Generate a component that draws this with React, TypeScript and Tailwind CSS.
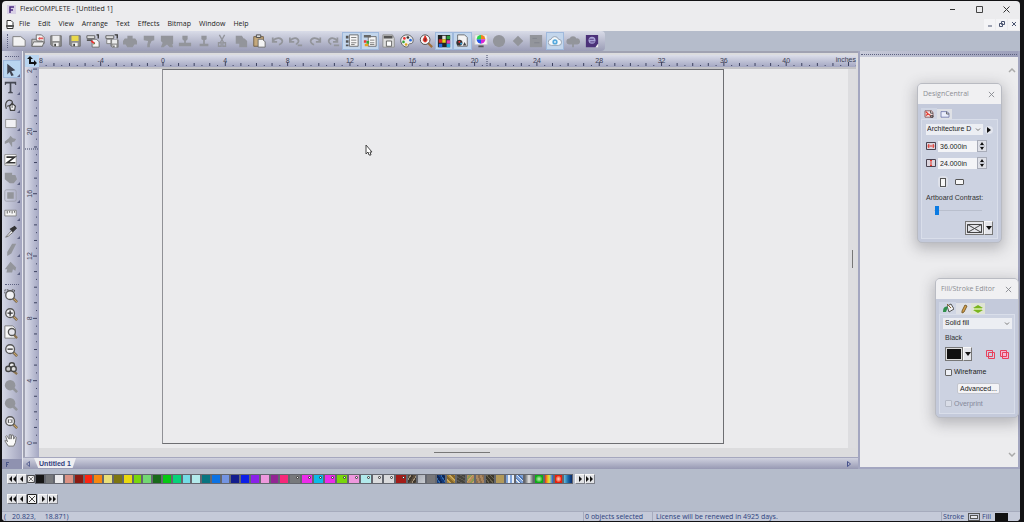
import type { ReactNode } from "react";

type IconProps = { children: ReactNode; className?: string; box?: string };

function Icon({ children, className = "size-4", box = "0 0 16 16" }: IconProps) {
  return (
    <svg viewBox={box} className={className} fill="none" aria-hidden="true">
      {children}
    </svg>
  );
}

const GREY = "#93959b";

// shared icon fragments
const page = (x: number, y: number, w = 9, h = 10) => (
  <path
    d={`M${x} ${y}h${w - 3}l3 3v${h - 3}h-${w}z`}
    fill="#f4f4f4"
    stroke="#666"
  />
);
const floppy = (x: number, y: number, s: number, label = "#ececec") => (
  <g transform={`translate(${x} ${y}) scale(${s})`}>
    <path d="M1 1h12v12H3l-2-2z" fill="#8e8e8e" stroke="#6a6a6a" />
    <path d="M3 1h8v6H3z" fill={label} />
    <path d="M4 9h6v4H4z" fill="#f2f2f2" />
    <path d="M5 10h2v3H5z" fill="#444" />
  </g>
);

const topTools: { name: string; on?: boolean; art: ReactNode }[] = [
  {
    name: "New",
    art: <path d="M1 3h9l5 4v7H1z" fill="#f3f3f3" stroke="#777" />,
  },
  {
    name: "Open",
    art: (
      <>
        {page(6, 1)}
        <path d="M1 6h5l1 2h6v6H1z" fill="#c9c9c9" stroke="#666" />
        <path d="M3 9h12l-2 5H1z" fill="#eee" stroke="#666" />
        <path d="M8 5l2-2v1h4v2h-4v1z" fill="#e45a5a" />
      </>
    ),
  },
  { name: "Save", art: floppy(1, 1, 1) },
  { name: "Save as", art: floppy(1, 1, 1, "#ead94c") },
  {
    name: "Import",
    art: (
      <>
        <path d="M1 2h9v3H1z" fill="#eee" stroke="#555" />
        <path d="M1 6h6v2H1z" fill="#555" />
        {page(7, 6, 8, 9)}
        <path d="M6 8l4 3" stroke="#e33" strokeWidth="2" />
        <path d="M8 13l2-2V9z" fill="#2a8a3a" />
        <path d="M12 1h2v4" stroke="#333" strokeWidth="1.5" />
      </>
    ),
  },
  {
    name: "Export",
    art: (
      <>
        <path d="M1 2h9v3H1z" fill="#eee" stroke="#555" />
        <path d="M2 6h6v5H2z" fill="#eee" stroke="#777" />
        {floppy(6, 6, 0.7)}
        <path d="M11 1h3v4" stroke="#333" strokeWidth="1.5" />
      </>
    ),
  },
  {
    name: "Print",
    art: <path d="M5 2h6v3h3l2 3v4h-3l-2 3H5l-2-3H0V8l2-3h3z" fill={GREY} />,
  },
  { name: "Cut plot", art: <path d="M2 2h12v5l-3 1-2 4v3H6v-3l1-4-5-1z" fill={GREY} /> },
  {
    name: "Rip and print",
    art: <path d="M1 2h14v9l-1 1 1 3h-4l-3-3-4 3H1l2-5-2-2z" fill={GREY} />,
  },
  {
    name: "Engrave",
    art: <path d="M5 2h6v4l-2 2v2h6v4H1v-4h6V8L5 6z" fill={GREY} />,
  },
  {
    name: "Route",
    art: <path d="M5 2h6v4l-2 1v4h4v3H3v-3h4V7L5 6z" fill={GREY} />,
  },
  {
    name: "Cut",
    art: (
      <>
        <path d="M5 1l5 9M11 1L6 10" stroke={GREY} strokeWidth="1.5" />
        <path d="M4 10h3v4H4zM9 10h3v4H9z" stroke={GREY} strokeWidth="1.5" />
      </>
    ),
  },
  { name: "Copy", art: <path d="M2 2h7l2 3h1l3 3v7H6v-4H2z" fill={GREY} /> },
  {
    name: "Paste",
    art: (
      <>
        <path d="M2 3h11v11H2z" fill="#c4a87c" stroke="#6f5c40" />
        <path d="M5 1h5v3H5z" fill="#ddd" stroke="#444" />
        {page(7, 6, 8, 9)}
      </>
    ),
  },
  {
    name: "Undo",
    art: <path d="M2 4v5h5M2 8c4-5 10-4 11 0 0 2-2 4-4 4" stroke={GREY} strokeWidth="2" />,
  },
  {
    name: "Undo all",
    art: <path d="M1 4v5h5M1 8c4-5 9-4 10 0 0 2-2 3-3 4M10 13h5" stroke={GREY} strokeWidth="2" />,
  },
  {
    name: "Redo",
    art: <path d="M14 4v5H9M14 8C10 3 4 4 3 8c0 2 2 4 4 4" stroke={GREY} strokeWidth="2" />,
  },
  {
    name: "Redo all",
    art: <path d="M13 4v5H8M13 8C9 3 4 4 3 8c0 2 1 3 3 4M9 13h6" stroke={GREY} strokeWidth="2" />,
  },
  {
    name: "Design central",
    on: true,
    art: (
      <>
        <path d="M5 1h10v13H5z" fill="#f6f6f6" stroke="#666" />
        <path d="M7 4h6M7 7h6M7 10h6M7 12h4" stroke="#777" />
        <path d="M1 2h3v3H1zM1 7h3v3H1zM1 12h3v2H1z" fill="#555" />
      </>
    ),
  },
  {
    name: "Fill editor",
    on: true,
    art: (
      <>
        <path d="M6 3h9v11H6z" fill="#f6f6f6" stroke="#666" />
        <path d="M1 1h8v3H1z" fill="#666" />
        <path d="M8 7h5M8 10h5M8 12h5" stroke="#777" />
        <path d="M1 7h3v3H1z" fill="#e33" />
        <path d="M4 8h3v3H4z" fill="#3a3" />
        <path d="M2 11h4v3H2z" fill="#e9a21e" />
      </>
    ),
  },
  {
    name: "Production manager",
    art: (
      <>
        <path d="M1 1h11l2 4v10H1z" fill="#dedede" stroke="#888" />
        <path d="M2 2h10v3H2z" fill="#555" />
        <path d="M5 8h6v6H5z" fill="#fff" stroke="#555" />
      </>
    ),
  },
  {
    name: "Color specs",
    art: (
      <>
        <path
          d="M8 1C3 1 0 5 1 9c1 4 4 6 7 6 2 0 1-3 3-4 2 0 4 0 4-4 0-3-3-6-7-6z"
          fill="#eee"
          stroke="#555"
        />
        <circle cx="5" cy="5" r="1.5" fill="#e33" />
        <circle cx="9" cy="4" r="1.5" fill="#333" />
        <circle cx="12" cy="7" r="1.5" fill="#2a6be0" />
        <circle cx="4" cy="9" r="1.5" fill="#37a637" />
        <circle cx="7" cy="12" r="1.5" fill="#e0a51c" />
      </>
    ),
  },
  {
    name: "Find color",
    art: (
      <>
        <path d="M10 10l5 5" stroke="#a0703a" strokeWidth="2.5" />
        <circle cx="7" cy="6.5" r="5.5" fill="#f8f8f8" stroke="#444" />
        <path d="M7 2L5 6c-1 4 5 4 4 0z" fill="#dc2a20" stroke="#dc2a20" />
        <path d="M7 5v3" stroke="#333" />
      </>
    ),
  },
  {
    name: "Swatch table",
    on: true,
    art: (
      <>
        <path d="M1 1h14v14H1z" fill="#222" />
        <path d="M6 2h4v4H6z" fill="#ddd" />
        <path d="M11 2h4v4h-4z" fill="#2a9d3e" />
        <path d="M2 6h4v4H2z" fill="#d92b2b" />
        <path d="M6 6h4v4H6z" fill="#e9d21e" />
        <path d="M11 7h4v4h-4z" fill="#e33bb0" />
        <path d="M2 11h4v4H2z" fill="#2a6be0" />
        <path d="M11 11h4v4h-4z" fill="#21a8d8" />
      </>
    ),
  },
  {
    name: "Fill page",
    on: true,
    art: (
      <>
        {page(3, 1, 11, 13)}
        <circle cx="5" cy="10" r="3.5" fill="#333" />
        <path d="M4 8h2v2H4z" fill="#e33" />
        <path d="M6 10h2v2H6z" fill="#37a6e0" />
        <path d="M11 9l2 4H9z" fill="#444" />
      </>
    ),
  },
  {
    name: "Color wheel",
    art: (
      <>
        <path d="M1 1h14v11H1z" fill="#f5f5f5" stroke="#ccc" />
        <path d="M8 6V1a5 5 0 0 1 5 5z" fill="#f2851f" />
        <path d="M8 6h5a5 5 0 0 1-5 5z" fill="#d62ad6" />
        <path d="M8 6v5a5 5 0 0 1-5-5z" fill="#2a55e8" />
        <path d="M8 6H3a5 5 0 0 1 5-5z" fill="#2ed44c" />
        <path d="M5 14h6" stroke="#555" strokeWidth="2" />
      </>
    ),
  },
  { name: "Stop", art: <circle cx="8" cy="8" r="7" fill={GREY} /> },
  { name: "Shape", art: <path d="M8 2l6 6-6 6-6-6z" fill={GREY} /> },
  {
    name: "Archive",
    art: (
      <>
        <path d="M1 1h14v14H1z" fill={GREY} />
        <path d="M4 5h5M6 10h6" stroke="#7f828c" />
      </>
    ),
  },
  {
    name: "Cloud",
    on: true,
    art: (
      <>
        <path
          d="M4 13a3.500 3.500 0 0 1-.5-7 4.500 4.500 0 0 1 8.500 0 3.500 3.500 0 0 1 0 7z"
          fill="#f4f8fb"
          stroke="#8f9cac"
        />
        <circle cx="8" cy="9" r="3" fill="#55a9dd" />
        <circle cx="8" cy="9" r="1" fill="#fff" />
      </>
    ),
  },
  {
    name: "Cloud upload",
    art: <path d="M4 12a3.500 3.500 0 0 1 0-7 4.500 4.500 0 0 1 8 0 3.500 3.500 0 0 1 1 7H9v3H7v-3z" fill={GREY} />,
  },
  {
    name: "Store",
    art: (
      <>
        <path d="M1 1h14v10l-3 4H1z" fill="#4b3179" />
        <path d="M15 11v4h-3z" fill="#eee" />
        <circle cx="8" cy="7" r="4" fill="#a9a4d8" />
        <path d="M5 6h5M6 9h5" stroke="#4b3179" />
      </>
    ),
  },
];

const lens = (
  <>
    <path d="M10 10l5 5" stroke="#6b5d48" strokeWidth="3" />
    <path d="M11 11l4 4" stroke="#c7a46b" strokeWidth="1.5" />
    <circle cx="7" cy="7" r="5" fill="#f2f2f4" stroke="#555" strokeWidth="1.5" />
  </>
);

const sideTools: { name: string; on?: boolean; art: ReactNode }[] = [
  {
    name: "Select",
    on: true,
    art: <path d="M4 1l10 8-5 1 3 5-3 1-2-5-3 3z" fill="#3f4350" />,
  },
  {
    name: "Text",
    art: (
      <path
        d="M1 1h14v4h-1l-1-2H9v10l2 1v1H5v-1l2-1V3H3L2 5H1z"
        fill="#454852"
      />
    ),
  },
  {
    name: "Bezier",
    art: (
      <>
        <path d="M3 12C0 4 5 0 9 2c4 3-2 6-5 7" stroke="#444" strokeWidth="1.5" />
        <path d="M10 5l4 4-1 5H8L7 9z" fill="#f2f2f2" stroke="#444" strokeWidth="1.5" />
        <path d="M10 7v4" stroke="#444" />
      </>
    ),
  },
  { name: "Rectangle", art: <path d="M2 3h13v10H2z" fill="#f1f1f4" stroke="#888" /> },
  { name: "Path edit", art: <path d="M1 8l5-4 2-3 3 3 4 1-2 3-3 1v6L6 9l-5 2z" fill={GREY} /> },
  {
    name: "Effects",
    art: (
      <>
        <path d="M1 2h14v13H1z" fill="#fff" stroke="#888" />
        <path d="M3 5h10L4 12h10" stroke="#333" strokeWidth="2" />
      </>
    ),
  },
  { name: "Weld", art: <path d="M1 2h9v3h4l2 5-4 5H7L1 10z" fill={GREY} /> },
  {
    name: "Fill region",
    art: (
      <>
        <rect x="1" y="1" width="14" height="14" rx="2" stroke="#9a9da8" />
        <rect x="4" y="4" width="8" height="8" fill={GREY} />
      </>
    ),
  },
  {
    name: "Measure",
    art: (
      <>
        <path d="M1 4h14v7H1z" fill="#f4f4f4" stroke="#777" />
        <path d="M4 5v3M7 5v2M10 5v3M13 5v2" stroke="#444" />
      </>
    ),
  },
  {
    name: "Eyedropper",
    art: (
      <>
        <path d="M2 15l7-8 2 2-6 5z" fill="#eee" stroke="#666" />
        <path d="M8 5l3 3 4-4-2-2z" fill="#333" stroke="#333" strokeWidth="1.5" />
      </>
    ),
  },
  { name: "Pencil", art: <path d="M10 1h5L9 13l-5 3v-5z" fill={GREY} /> },
  { name: "Bucket", art: <path d="M8 1l7 7-1 4-3-2-1 4H3l1-4H1z" fill={GREY} /> },
];

const viewTools: { name: string; art: ReactNode }[] = [
  {
    name: "Zoom area",
    art: (
      <>
        {lens}
        <path d="M1 5V1h4M9 1h3v3" stroke="#444" strokeDasharray="2 1" />
      </>
    ),
  },
  {
    name: "Zoom in",
    art: (
      <>
        {lens}
        <path d="M7 4v6M4 7h6" stroke="#333" strokeWidth="1.5" />
      </>
    ),
  },
  {
    name: "Zoom page",
    art: (
      <>
        <path d="M1 1h9l3 3v11H1z" fill="#f7f7f7" stroke="#777" />
        <path d="M11 11l4 4" stroke="#8a7350" strokeWidth="2.5" />
        <circle cx="9" cy="8" r="4" fill="#e6e6ec" stroke="#555" strokeWidth="1.5" />
      </>
    ),
  },
  {
    name: "Zoom out",
    art: (
      <>
        {lens}
        <path d="M4 7h6" stroke="#333" strokeWidth="1.5" />
      </>
    ),
  },
  {
    name: "Zoom selection",
    art: (
      <>
        <path d="M10 11l5 4" stroke="#8a7350" strokeWidth="2.5" />
        <circle cx="9" cy="5" r="3" fill="#eee" stroke="#444" strokeWidth="1.5" />
        <circle cx="5" cy="9" r="3" fill="#ccc" stroke="#444" strokeWidth="1.5" />
        <circle cx="11" cy="9" r="3" fill="#ddd" stroke="#444" strokeWidth="1.5" />
      </>
    ),
  },
  {
    name: "Zoom previous",
    art: (
      <>
        <circle cx="7" cy="7" r="6" fill={GREY} />
        <path d="M10 10l5 5" stroke={GREY} strokeWidth="3" />
      </>
    ),
  },
  {
    name: "Zoom next",
    art: (
      <>
        <circle cx="7" cy="7" r="6" fill={GREY} />
        <path d="M10 10l5 5" stroke={GREY} strokeWidth="3" />
      </>
    ),
  },
  {
    name: "Zoom 1:1",
    art: (
      <>
        {lens}
        <path d="M5 5v4M9 5v4M7 5v1M7 8v1" stroke="#333" />
      </>
    ),
  },
  {
    name: "Pan",
    art: (
      <path
        d="M5 15L1 9l1-1 2 2-2-6 1-1 3 4V2h2v5l1-5 2 1v4l2-3 1 1-1 6-2 4z"
        fill="#fafafa"
        stroke="#666"
      />
    ),
  },
];

const menus = ["File", "Edit", "View", "Arrange", "Text", "Effects", "Bitmap", "Window", "Help"];

const swatches = [
  "#151515", "#77797c", "#ececee", "#dc9284", "#8b1a12", "#fb2412", "#f6870f",
  "#e9df78", "#7c7510", "#e8d90e", "#78d60c", "#72d873", "#186a1b", "#05c814",
  "#07d27a", "#74dce6", "#b2eaec", "#077481", "#0b72e4", "#7394e2", "#121c8e",
  "#0d1ee8", "#8a20ea", "#ee98de", "#932594", "#f62779",
];

const spots = [
  "#77797c", "#ec2bea", "#0bbce8", "#ec2bea", "#78d60c", "#ee98de", "#b2eaec",
  "#dadbdd", "#dadbdd", "#a31c18",
];

const textures = [
  "bg-[repeating-linear-gradient(120deg,#5a4c3c_0_2px,#a0907a_2px_3px,#40382e_3px_5px)]",
  "bg-linear-to-br from-[#a9adb5] to-[#c9ccd2]",
  "bg-[#77777a]",
  "bg-[repeating-linear-gradient(60deg,#123a7c_0_2px,#2f66a8_2px_3px,#0c2557_3px_5px)]",
  "bg-[repeating-linear-gradient(45deg,#a8843a_0_2px,#cba95a_2px_3px,#856628_3px_5px)]",
  "bg-[repeating-linear-gradient(30deg,#45433c_0_2px,#5c5a50_2px_3px)]",
  "bg-[repeating-linear-gradient(130deg,#b58d58_0_2px,#8a9a52_2px_4px,#c99a6c_4px_5px)]",
  "bg-[repeating-linear-gradient(70deg,#8a6c4c_0_2px,#a98660_2px_4px)]",
  "bg-[repeating-linear-gradient(50deg,#3c382c_0_2px,#6a624c_2px_3px)]",
  "bg-[#b39a5a]",
  "bg-[repeating-linear-gradient(90deg,#7fa3d8_0_2px,#e8eef6_2px_4px)]",
  "bg-[repeating-linear-gradient(45deg,#7fa3d8_0_2px,#dfe9f6_2px_3px,#4a73b4_3px_4px)]",
  "bg-linear-to-r from-[#6a6d70] via-[#e6e6e6] to-[#6a6d70]",
  "bg-radial from-[#b8f8b0] to-[#0cae18] to-60%",
  "bg-linear-to-r from-[#e02020] via-[#e6e620] to-[#2050e0]",
  "bg-radial from-[#ffd0c0] to-[#e8200c] to-60%",
  "bg-linear-to-r from-[#64c0e0] via-[#1a6aa8] to-[#0c2a6c]",
];

// pixels per inch at the current zoom
const INCH = 15.58;

const tickLength = (m: number) => (m % 8 === 0 ? 4 : m % 2 === 0 ? 3 : 1);

function TopRuler() {
  const marks = Array.from({ length: 240 }, (_, i) => i - 15);
  const labels = [-4, 0, 4, 8, 12, 16, 20, 24, 28, 32, 36, 40];
  return (
    <svg className="h-full w-full" role="img" aria-label="Horizontal ruler">
      {marks.map((m) => (
        <path key={m} d={`M${124 + (m / 2) * INCH} 11v-${tickLength(m)}`} stroke="#3d4260" />
      ))}
      <g className="fill-[#3c4054] text-[7px]">
        <text x="0" y="8">
          8
        </text>
        {labels.map((n) => (
          <text key={n} x={124 + n * INCH} y="8" textAnchor="middle">
            {n}
          </text>
        ))}
      </g>
      <path d="M448 0v12" stroke="#3d4260" strokeDasharray="1 1" />
    </svg>
  );
}

function SideRuler() {
  const marks = Array.from({ length: 49 }, (_, i) => i);
  const labels = [0, 4, 8, 12, 16, 20];
  return (
    <svg className="h-full w-full" role="img" aria-label="Vertical ruler">
      {marks.map((m) => (
        <path key={m} d={`M12 ${376 - (m / 2) * INCH}h-${tickLength(m)}`} stroke="#3d4260" />
      ))}
      <g className="fill-[#3c4054] text-[7px]">
        <text x="7" y="4" textAnchor="middle" transform="rotate(-90 7 4)">
          2
        </text>
        {labels.map((n) => {
          const y = 376 - n * INCH;
          return (
            <text key={n} x="7" y={y} textAnchor="middle" transform={`rotate(-90 7 ${y})`}>
              {n}
            </text>
          );
        })}
      </g>
      <path d="M0 82h13" stroke="#3d4260" strokeDasharray="1 1" />
    </svg>
  );
}

function NavButton({ label, d }: { label: string; d: string }) {
  return (
    <button
      type="button"
      aria-label={label}
      className="flex h-[10px] w-[10px] items-center justify-center border border-t-[#f8f8f8] border-r-[#7c7f88] border-b-[#7c7f88] border-l-[#f8f8f8] bg-[#e2e3e6]"
    >
      <Icon box="0 0 8 6" className="h-[6px] w-[8px] shrink-0">
        <path d={d} fill="#111" />
      </Icon>
    </button>
  );
}

const FIRST = "M4 0v6L1 3zM8 0v6L5 3z";
const PREV = "M5 0v6L2 3z";
const NEXT = "M3 0v6l3-3z";
const LAST = "M0 0v6l3-3zM4 0v6l3-3z";

function NoColor() {
  return (
    <Icon box="0 0 10 10" className="size-full">
      <path d="M.5.5h9v9h-9z" fill="#f4f4f4" stroke="#222" />
      <path d="M2 2l6 6M8 2L2 8" stroke="#444" />
    </Icon>
  );
}

function Swatches() {
  return (
    <div className="flex h-[10px] w-[546px]">
      <button type="button" aria-label="No color" className="min-w-0 flex-1">
        <NoColor />
      </button>
      {swatches.map((c) => (
        <button
          key={c}
          type="button"
          aria-label={c}
          className="min-w-0 flex-1 border border-[#63666e]"
          style={{ backgroundColor: c }}
        />
      ))}
      {spots.map((c, i) => (
        <button
          key={i}
          type="button"
          aria-label={`Spot ${c}`}
          className="flex min-w-0 flex-1 justify-end border border-[#63666e] p-px"
          style={{ backgroundColor: c }}
        >
          <span className="size-[3px] rounded-full border border-[#333] bg-white" />
        </button>
      ))}
      {textures.map((t, i) => (
        <button
          key={i}
          type="button"
          aria-label={`Pattern ${i + 1}`}
          className={`min-w-0 flex-1 border border-[#63666e] ${t}`}
        />
      ))}
    </div>
  );
}

function PanelTitle({ title }: { title: string }) {
  return (
    <header className="flex h-[20px] items-center justify-between bg-[#f0f0f2] pr-[6px] pl-[5px]">
      <h2 className="font-['Open_Sans',sans-serif] text-[7px] text-[#8b8d93]">{title}</h2>
      <button type="button" aria-label={`Close ${title}`}>
        <Icon box="0 0 8 8" className="size-[7px]">
          <path d="M1 1l6 6M7 1L1 7" stroke="#85878d" />
        </Icon>
      </button>
    </header>
  );
}

function Chevron() {
  return (
    <Icon box="0 0 6 4" className="pointer-events-none -ml-[8px] h-[4px] w-[6px] shrink-0">
      <path d="M1 .5l2 2 2-2" stroke="#777" />
    </Icon>
  );
}

function SizeField({ label, value, art }: { label: string; value: string; art: string }) {
  const id = `page-${label.toLowerCase()}`;
  return (
    <div className="flex h-[12px] items-center">
      <label htmlFor={id} title={label} className="mr-[2px]">
        <svg viewBox="0 0 10 8" className="h-[8px] w-[10px]" fill="none" role="img" aria-label={label}>
          <path d="M.5.5h9v7h-9z" fill="#dcd5de" stroke="#4a4350" />
          <path d={art} stroke="#e0382e" />
        </svg>
      </label>
      <input
        id={id}
        defaultValue={value}
        className="h-[11px] w-[39px] bg-[#f3f4f7] px-[2px] text-[7px] text-[#222]"
      />
      <button
        type="button"
        aria-label={`Change ${label}`}
        className="flex h-[12px] w-[10px] items-center justify-center border border-[#a8acb8] bg-[#dfe1e8]"
      >
        <Icon box="0 0 6 10" className="h-[10px] w-[6px]">
          <path d="M3 1l2 3H1zM3 9l2-3H1z" fill="#111" />
          <path d="M0 5h6" stroke="#a8acb8" />
        </Icon>
      </button>
    </div>
  );
}

function DropArrow({ label }: { label: string }) {
  return (
    <button
      type="button"
      aria-label={label}
      className="flex h-[14px] w-[9px] items-center justify-center border border-t-[#f8f8f8] border-r-[#777] border-b-[#777] border-l-[#f8f8f8] bg-[#e4e5ea]"
    >
      <Icon box="0 0 6 4" className="h-[4px] w-[6px]">
        <path d="M0 0h6L3 4z" fill="#111" />
      </Icon>
    </button>
  );
}

function DesignCentral() {
  return (
    <section className="absolute top-[32px] right-[16px] h-[160px] w-[85px] overflow-hidden rounded-[5px] border border-[#b9bbc2] bg-[#c4cadb] shadow-[0_4px_14px_2px_rgba(60,60,70,0.3)]">
      <PanelTitle title="DesignCentral" />
      <div className="px-[3px] pt-[4px]">
        <div className="flex h-[11px] items-end">
          <button type="button" aria-label="Artboard" className="flex h-[11px] w-[16px] items-center justify-center bg-[#d0d6e4]">
            <Icon box="0 0 12 10" className="h-[8px] w-[10px]">
              <path d="M1 1h8l2 2v6H1z" fill="#f3e4e4" stroke="#7a4646" />
              <path d="M2 2l3 3M5 5l3 2M2 7l3-2" stroke="#e2372c" strokeWidth="1.5" />
              <path d="M8 1v3h3M8 7h3v2H8z" stroke="#333" />
            </Icon>
          </button>
          <button type="button" aria-label="Page" className="flex h-[10px] w-[15px] items-center justify-center bg-[#dfe1e6]">
            <Icon box="0 0 12 10" className="h-[8px] w-[10px]">
              <path d="M1 2h7l3 2v5H1z" fill="#e9edfb" stroke="#6b74a8" />
              <path d="M8 2v3h3" stroke="#444" />
            </Icon>
          </button>
        </div>
        <div className="flex h-[120px] flex-col border border-[#d9deea] bg-[#ccd2e1] px-[4px] pt-[4px]">
          <div className="flex items-center">
            <select
              aria-label="Page size"
              className="h-[11px] w-[57px] shrink-0 appearance-none bg-[#eceef3] pl-px text-[7px] text-[#222]"
            >
              <option>Architecture D</option>
            </select>
            <Chevron />
            <button type="button" aria-label="More sizes" className="ml-[4px] flex size-[8px] shrink-0 items-center justify-center rounded-sm bg-[#e2e5ee]">
              <Icon box="0 0 4 6" className="h-[6px] w-[4px]">
                <path d="M0 0v6l4-3z" fill="#111" />
              </Icon>
            </button>
          </div>
          <div className="mt-[5px] flex flex-col gap-[5px]">
            <SizeField label="Width" value="36.000in" art="M2 4h6M3 2L2 4l1 2M7 2l1 2-1 2" />
            <SizeField label="Height" value="24.000in" art="M5 1v6M4 2l1-1 1 1M4 6l1 1 1-1" />
          </div>
          <div className="mt-[7px] flex items-center gap-[5px] pl-[12px]">
            <button type="button" aria-label="Portrait" className="flex h-[12px] w-[10px] items-center justify-center rounded-sm bg-[#dee1ea]">
              <span className="h-[9px] w-[6px] border border-[#555] bg-[#f7f7f7]" />
            </button>
            <button type="button" aria-label="Landscape" className="flex h-[12px] w-[12px] items-center justify-center">
              <span className="h-[6px] w-[9px] rounded-[1px] border border-[#555] bg-[#f7f7f7]" />
            </button>
          </div>
          <label htmlFor="contrast" className="mt-[5px] text-[7px] leading-[10px] whitespace-nowrap text-[#333]">
            Artboard Contrast:
          </label>
          <input
            id="contrast"
            type="range"
            defaultValue={3}
            className="mt-[3px] ml-[8px] h-[9px] w-[48px] appearance-none bg-transparent [&::-webkit-slider-runnable-track]:h-px [&::-webkit-slider-runnable-track]:bg-[#b9bfcd] [&::-webkit-slider-thumb]:-mt-[4px] [&::-webkit-slider-thumb]:h-[9px] [&::-webkit-slider-thumb]:w-[4px] [&::-webkit-slider-thumb]:appearance-none [&::-webkit-slider-thumb]:bg-[#0b7be2]"
          />
          <div className="mt-[6px] flex justify-end">
            <button type="button" aria-label="Artboard color" className="flex h-[14px] w-[19px] items-center justify-center border border-[#777] bg-[#e4e5ea]">
              <Icon box="0 0 15 9" className="h-[9px] w-[15px]">
                <path d="M.5.5h14v8H.5zl14 8M14.500.5l-14 8" stroke="#444" />
              </Icon>
            </button>
            <DropArrow label="Artboard color menu" />
          </div>
        </div>
      </div>
    </section>
  );
}

function FillStrokeEditor() {
  return (
    <section className="absolute top-[227px] -right-px h-[140px] w-[84px] overflow-hidden rounded-[5px] border border-[#b9bbc2] bg-[#c4cadb] shadow-[0_4px_14px_2px_rgba(60,60,70,0.3)]">
      <PanelTitle title="Fill/Stroke Editor" />
      <div className="px-[3px] pt-[3px]">
        <div className="flex h-[12px] items-end">
          <button type="button" aria-label="Fill" className="flex h-[12px] w-[17px] items-center justify-center bg-[#d0d6e4]">
            <Icon box="0 0 12 10" className="h-[10px] w-[12px]">
              <path d="M5 3l4-2 3 5-5 3z" fill="#eee" stroke="#555" />
              <path d="M1 9c0-5 2-6 5-5l-2 5z" fill="#2f8f4a" />
              <path d="M5 1l4 4" stroke="#8a6530" />
            </Icon>
          </button>
          <button type="button" aria-label="Stroke" className="flex h-[11px] w-[15px] items-center justify-center bg-[#dfe1e6]">
            <Icon box="0 0 8 10" className="h-[10px] w-[8px]">
              <path d="M5 1l2 1-3 6-2 1V7z" fill="#dca24a" stroke="#7b6030" />
            </Icon>
          </button>
          <button type="button" aria-label="Layers" className="flex h-[11px] w-[14px] items-center justify-center bg-[#dfe4d4]">
            <Icon box="0 0 10 8" className="h-[8px] w-[10px]">
              <path d="M5 0l5 3H0z" fill="#7ab51d" />
              <path d="M0 5h10L5 8z" fill="#7ab51d" />
              <path d="M1 4h8" stroke="#a8dc3c" />
            </Icon>
          </button>
        </div>
        <div className="flex h-[100px] flex-col border border-[#d9deea] bg-[#ccd2e1] px-[3px] pt-[3px] text-[7px]">
          <div className="flex items-center">
            <select
              aria-label="Fill type"
              className="h-[11px] w-[69px] appearance-none bg-[#eceef3] pl-[2px] text-[7px] text-[#222]"
            >
              <option>Solid fill</option>
            </select>
            <Chevron />
          </div>
          <p className="mt-[4px] pl-[2px] leading-[9px] text-[#333]">Black</p>
          <div className="mt-[5px] flex items-center pl-[2px]">
            <button type="button" aria-label="Fill color" className="flex h-[14px] w-[18px] items-center justify-center border border-[#777] bg-[#ddd]">
              <span className="h-[10px] w-[14px] bg-[#101010]" />
            </button>
            <DropArrow label="Fill color menu" />
            <div className="ml-[14px] flex gap-[5px]">
              <button type="button" aria-label="No overprint">
                <Icon box="0 0 9 9" className="size-[9px]">
                  <path d="M.5.5h6v6h-6zM2.500 2.500h6v6h-6z" stroke="#e8415c" />
                </Icon>
              </button>
              <button type="button" aria-label="Overprint all">
                <Icon box="0 0 9 9" className="size-[9px]">
                  <path d="M.5.5h6v6h-6zM2.500 2.500h6v6h-6z" fill="#f3b8d4" stroke="#e8415c" />
                </Icon>
              </button>
            </div>
          </div>
          <label className="mt-[6px] flex items-center gap-[2px] pl-[2px] leading-[10px] text-[#222]">
            <input type="checkbox" className="size-[7px] appearance-none rounded-[1px] border border-[#666] bg-[#eef0f5]" />
            Wireframe
          </label>
          <button
            type="button"
            className="mt-[6px] ml-[14px] h-[11px] w-[43px] rounded-[2px] border border-[#c2c5ce] bg-[#f3f3f6] leading-[9px] text-[#222]"
          >
            Advanced...
          </button>
          <label className="mt-[5px] flex items-center gap-[2px] pl-[2px] leading-[9px] text-[#84899a]">
            <input type="checkbox" disabled className="size-[7px] appearance-none rounded-[1px] border border-[#b4b9c6] bg-[#d9dde7]" />
            Overprint
          </label>
        </div>
      </div>
    </section>
  );
}

function TitleBar() {
  return (
    <header className="flex h-[16px] shrink-0 items-center pr-[10px] pl-[5px]">
      <Icon box="0 0 9 9" className="size-[9px]">
        <path d="M0 0h9v9H0z" fill="#d8d0e6" />
        <path d="M3 8V2h4M3 5h3" stroke="#4a2a80" strokeWidth="1.5" />
      </Icon>
      <h1 className="ml-[4px] text-[7px] text-[#222]">FlexiCOMPLETE - [Untitled 1]</h1>
      <div className="ml-auto flex gap-[20px]">
        <button type="button" aria-label="Minimize">
          <Icon box="0 0 7 7" className="size-[7px]">
            <path d="M1 3.500h5" stroke="#333" />
          </Icon>
        </button>
        <button type="button" aria-label="Maximize">
          <Icon box="0 0 7 7" className="size-[7px]">
            <path d="M.5.5h6v6h-6z" stroke="#444" />
          </Icon>
        </button>
        <button type="button" aria-label="Close">
          <Icon box="0 0 7 7" className="size-[7px]">
            <path d="M.5.5l6 6M6.500.5l-6 6" stroke="#333" />
          </Icon>
        </button>
      </div>
    </header>
  );
}

function MenuBar() {
  return (
    <nav className="flex h-[14px] shrink-0 items-center pr-px pl-[4px]">
      <Icon box="0 0 8 9" className="h-[9px] w-[8px]">
        <path d="M1 .5h4l2 2v6H1z" fill="#fff" stroke="#333" />
        <path d="M0 5h8v2H0z" fill="#555" />
      </Icon>
      <ul className="ml-[5px] flex gap-[8px] text-[7px] text-[#222]">
        {menus.map((m) => (
          <li key={m}>
            <button type="button">{m}</button>
          </li>
        ))}
      </ul>
      <div className="ml-auto flex gap-px">
        {["M1 5h4", "M2.500.5h3v3h-3zM.5 2.500h3v3h-3z", "M1 1l4 4M5 1L1 5"].map((d, i) => (
          <button
            key={d}
            type="button"
            aria-label={["Minimize document", "Restore document", "Close document"][i]}
            className="flex size-[11px] items-center justify-center bg-[#f4f4f6]"
          >
            <Icon box="0 0 6 6" className="size-[6px]">
              <path d={d} stroke="#4b5570" />
            </Icon>
          </button>
        ))}
      </div>
    </nav>
  );
}

function ToolBar() {
  return (
    <div className="flex h-[20px] shrink-0 bg-[#b5bccb]">
      <div className="flex items-center rounded-r-sm bg-linear-to-b from-[#d9dce8] to-[#9b9db6] pr-[4px] pl-[5px]">
        <span className="h-[14px] border-l border-dotted border-[#5d6180]" />
        <div className="ml-[2px] flex w-[591px]">
          {topTools.map((t) => (
            <button
              key={t.name}
              type="button"
              aria-label={t.name}
              className={`flex h-[18px] min-w-0 flex-1 items-center justify-center border ${
                t.on ? "border-[#9fb9dc] bg-[#c3d6ec]" : "border-transparent"
              }`}
            >
              <Icon className="size-[14px] shrink-0">{t.art}</Icon>
            </button>
          ))}
        </div>
      </div>
    </div>
  );
}

function SideBar() {
  return (
    <aside className="flex w-[20px] shrink-0 flex-col bg-linear-to-r from-[#d5d8e5] to-[#a3a5bf]">
      <span className="mx-[3px] mt-[5px] border-t border-dotted border-[#5d6180]" />
      <div className="mt-[3px] flex flex-col">
        {sideTools.map((t) => (
          <button
            key={t.name}
            type="button"
            aria-label={t.name}
            className={`mx-px flex h-[18px] items-center border ${
              t.on ? "border-[#9fb9dc] bg-[#b9d5f0]" : "border-transparent"
            }`}
          >
            <Icon className="size-[13px]">{t.art}</Icon>
            <Icon box="0 0 3 3" className="size-[3px] self-end">
              <path d="M3 0v3H0z" fill="#5b6080" />
            </Icon>
          </button>
        ))}
      </div>
      <span className="mx-[3px] mt-[8px] border-t border-dotted border-[#5d6180]" />
      <div className="mt-[2px] flex flex-col">
        {viewTools.map((t) => (
          <button key={t.name} type="button" aria-label={t.name} className="flex h-[18px] items-center pl-[2px]">
            <Icon className="size-[14px]">{t.art}</Icon>
          </button>
        ))}
      </div>
      <div className="mt-auto flex h-[10px] items-center bg-[#8f92b0] pl-[4px]">
        <Icon box="0 0 4 5" className="h-[5px] w-[4px]">
          <path d="M0 .5h3M0 2.500h2M.5 0v5" stroke="#4c5788" />
        </Icon>
      </div>
    </aside>
  );
}

function Workspace() {
  return (
    <main className="flex min-w-0 flex-1 flex-col border-l border-[#e6e7ee] bg-[#c5c7d6]">
      <div className="flex min-h-0 flex-1 flex-col border-t-2 border-l-2 border-[#a0a2b2] bg-[#dcdcde] pt-[2px] pr-[2px]">
        <div className="flex h-[12px] shrink-0">
          <button type="button" aria-label="Ruler origin" className="flex w-[14px] shrink-0 items-center justify-center bg-[#b9d5f0]">
            <Icon box="0 0 10 10" className="size-[10px]">
              <path d="M3 2v5h5" stroke="#111" strokeWidth="2" />
              <path d="M3 0l3 3H0zM10 7L7 4v6z" fill="#111" />
            </Icon>
          </button>
          <div className="relative min-w-0 flex-1 bg-linear-to-b from-[#dcdeea] to-[#a4a7c2]">
            <TopRuler />
            <span className="absolute top-0 right-0 text-[7px] leading-[10px] text-[#3c4054]">inches</span>
          </div>
        </div>
        <div className="flex min-h-0 flex-1">
          <div className="w-[14px] shrink-0 bg-linear-to-r from-[#dcdeea] to-[#a4a7c2]">
            <SideRuler />
          </div>
          <div className="flex min-w-0 flex-1 flex-col border-t-2 border-[#c3c3c7]">
            <div className="flex min-h-0 flex-1">
              <div className="relative min-w-0 flex-1 overflow-hidden bg-[#ebebed]">
                <div className="ml-[123px] h-[375px] w-[562px] border border-[#6d6e72] border-l-[#909196]" />
                <Icon box="0 0 8 12" className="absolute top-[75px] left-[326px] h-[12px] w-[8px]">
                  <path d="M1 1v9l2-2 1 3h2L5 8h2z" fill="#fff" stroke="#444" />
                </Icon>
              </div>
              <div className="flex w-[8px] shrink-0 items-center justify-center bg-[#dddde0]">
                <span className="h-[18px] w-px bg-[#777]" />
              </div>
            </div>
            <div className="flex h-[9px] shrink-0 items-center justify-center bg-[#dcdcde]">
              <span className="ml-[29px] h-px w-[56px] bg-[#777]" />
            </div>
          </div>
        </div>
      </div>
      <div className="flex h-[12px] shrink-0 items-start border-t border-[#a5a7be] bg-linear-to-b from-[#d0d2df] to-[#9799b3]">
        <button type="button" aria-label="Previous tab" className="ml-[3px] self-center">
          <Icon box="0 0 4 6" className="h-[6px] w-[4px]">
            <path d="M3.500.5v5L.5 3z" stroke="#5c6594" />
          </Icon>
        </button>
        <button
          type="button"
          className="ml-[4px] h-[10px] w-[42px] bg-[#eeeef1] text-center text-[7px] leading-[9px] font-bold whitespace-nowrap text-[#31407c] [clip-path:polygon(0_0,100%_0,92%_100%,10%_100%)]"
        >
          Untitled 1
        </button>
        <button type="button" aria-label="Next tab" className="mr-[7px] ml-auto self-center">
          <Icon box="0 0 4 6" className="h-[6px] w-[4px]">
            <path d="M.5.5v5l3-2.500z" stroke="#47528c" />
          </Icon>
        </button>
      </div>
    </main>
  );
}

function Dock() {
  return (
    <aside className="relative flex w-[162px] shrink-0 flex-col border-r-2 border-b-2 border-l-2 border-[#a3a6c0] bg-[#ececee]">
      <div className="flex h-[6px] items-center bg-linear-to-r from-[#c9ccda] to-[#9c9fba] px-px">
        <span className="flex-1 border-t border-dotted border-[#5d6180]" />
      </div>
      <div className="flex flex-1 flex-col items-end justify-between pt-[11px] pr-[2px] pb-[10px]">
        <Icon box="0 0 8 5" className="h-[5px] w-[8px]">
          <path d="M1 4l3-3 3 3" stroke="#aaa" strokeWidth="1.5" />
        </Icon>
        <Icon box="0 0 8 5" className="h-[5px] w-[8px]">
          <path d="M1 1l3 3 3-3" stroke="#aaa" strokeWidth="1.5" />
        </Icon>
      </div>
      <DesignCentral />
      <FillStrokeEditor />
    </aside>
  );
}

function Palettes() {
  return (
    <div className="flex h-[42px] shrink-0 flex-col gap-[10px] bg-[#b5bccb] pt-[5px] pl-[5px]">
      <div className="flex">
        <NavButton label="First colors" d={FIRST} />
        <NavButton label="Previous colors" d={PREV} />
        <Swatches />
        <span className="w-[2px]" />
        <NavButton label="Next colors" d={NEXT} />
        <NavButton label="Last colors" d={LAST} />
      </div>
      <div className="flex">
        <NavButton label="First used" d={FIRST} />
        <NavButton label="Previous used" d={PREV} />
        <button type="button" aria-label="No color used" className="mr-px size-[10px]">
          <NoColor />
        </button>
        <NavButton label="Next used" d={NEXT} />
        <NavButton label="Last used" d={LAST} />
      </div>
    </div>
  );
}

function StatusBar() {
  return (
    <footer className="flex h-[10px] shrink-0 items-center border-t border-[#a6abbd] bg-[#c5cad9] px-[2px] font-['Open_Sans',sans-serif] text-[7px] leading-[9px] text-[#2b3f7e]">
      <span>(</span>
      <span className="ml-[6px]">20.823,</span>
      <span className="ml-[9px]">18.871)</span>
      <span className="ml-auto w-[69px] border-l border-[#a6abbd] pl-px">0 objects selected</span>
      <span className="w-[289px] border-l border-[#a6abbd] pl-[3px]">License will be renewed in 4925 days.</span>
      <span className="border-l border-[#a6abbd] pl-px">Stroke</span>
      <span className="ml-[4px] flex h-[8px] w-[12px] items-center justify-center border border-[#555]">
        <span className="h-[4px] w-[8px] border border-[#555] bg-[#e8e8ec]" />
      </span>
      <span className="ml-[2px]">Fill</span>
      <span className="mr-[10px] ml-[4px] h-[8px] w-[13px] bg-[#111]" />
    </footer>
  );
}

export default function App() {
  return (
    <div className="h-screen bg-[#121214] pt-px pr-[4px] pb-px pl-[2px]">
      <div className="flex h-full flex-col overflow-hidden rounded-[4px] bg-[#ececee] font-['Open_Sans',sans-serif]">
        <TitleBar />
        <MenuBar />
        <ToolBar />
        <div className="flex min-h-0 flex-1 font-['Liberation_Sans',sans-serif]">
          <SideBar />
          <Workspace />
          <Dock />
        </div>
        <Palettes />
        <StatusBar />
      </div>
    </div>
  );
}
